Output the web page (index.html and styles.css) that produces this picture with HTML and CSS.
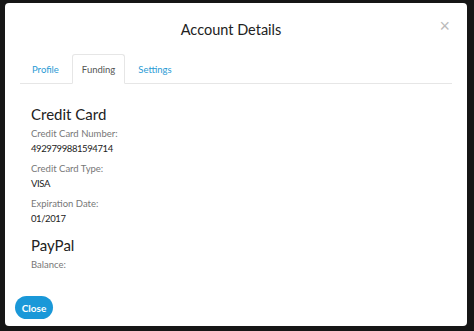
FILE: index.html
```html
<!DOCTYPE html>
<html lang="en">
<head>
<meta charset="UTF-8">
<title>Account Details</title>
<link rel="stylesheet" href="styles.css">
</head>
<body>
<div class="modal">
  <div class="modal-header">
    <h2>Account Details</h2>
    <button class="close-x" title="Close">&times;</button>
  </div>

  <ul class="tabs">
    <li><a href="#">Profile</a></li>
    <li class="active"><a href="#">Funding</a></li>
    <li><a href="#">Settings</a></li>
  </ul>

  <div class="tab-content">
    <h3>Credit Card</h3>
    <div class="field">
      <div class="label">Credit Card Number:</div>
      <div class="value">4929799881594714</div>
    </div>
    <div class="field">
      <div class="label">Credit Card Type:</div>
      <div class="value">VISA</div>
    </div>
    <div class="field">
      <div class="label">Expiration Date:</div>
      <div class="value">01/2017</div>
    </div>

    <h3>PayPal</h3>
    <div class="field">
      <div class="label">Balance:</div>
    </div>
  </div>

  <div class="modal-footer">
    <button class="btn-close">Close</button>
  </div>
</div>
</body>
</html>
```

FILE: styles.css
```css
body {
  margin: 0;
  background: #161616;
  font-family: Lato, "Open Sans", Arial, sans-serif;
  height: 331px;
  overflow: hidden;
}

.modal {
  background: #fff;
  margin: 3px 7px 0 5px;
  height: 323px;
  border-radius: 4px;
  display: flex;
  flex-direction: column;
  padding: 0 15px;
  box-sizing: border-box;
}

.modal-header {
  height: 51px;
  display: flex;
  align-items: center;
  justify-content: center;
  position: relative;
  padding-right: 10px;
}
.modal-header h2 {
  margin: 0;
  font-size: 14.5px;
  font-weight: normal;
  color: #222;
  padding-top: 1px;
}
.close-x {
  position: absolute;
  right: 2px;
  top: 14px;
  background: none;
  border: none;
  color: #bbb;
  font-size: 18px;
  line-height: 1;
  cursor: pointer;
  padding: 0;
}

.tabs {
  list-style: none;
  margin: 0;
  padding: 0;
  display: flex;
  border-bottom: 1px solid #e6e6e6;
  height: 29px;
}
.tabs li {
  margin-bottom: -1px;
}
.tabs a {
  display: block;
  height: 29px;
  line-height: 29px;
  padding: 0 11px;
  font-size: 9.5px;
  color: #2a9bd5;
  text-decoration: none;
  border: 1px solid transparent;
  border-radius: 3px 3px 0 0;
  box-sizing: border-box;
  margin-right: 1px;
}
.tabs .active a {
  color: #555;
  background: #fff;
  border-color: #e6e6e6 #e6e6e6 #fff;
  height: 30px;
  padding: 0 9px;
}

.tab-content {
  flex: 1;
  padding: 21px 11px 0;
}
.tab-content h3 {
  margin: 0 0 4px;
  font-size: 15px;
  font-weight: normal;
  color: #222;
  line-height: 18px;
}
.field {
  margin-bottom: 6px;
}
.label {
  font-size: 9.5px;
  color: #777;
  line-height: 14px;
}
.value {
  font-size: 9.5px;
  color: #222;
  line-height: 15px;
  letter-spacing: -0.4px;
}
.field + h3 {
  margin-top: 10px;
}

.modal-footer {
  padding-bottom: 7px;
}
.btn-close {
  background: #1a98d8;
  color: #fff;
  border: none;
  border-radius: 12px;
  height: 23px;
  width: 38px;
  padding: 0;
  font-family: inherit;
  font-size: 10px;
  font-weight: bold;
  margin-left: -5px;
  cursor: pointer;
}
```
